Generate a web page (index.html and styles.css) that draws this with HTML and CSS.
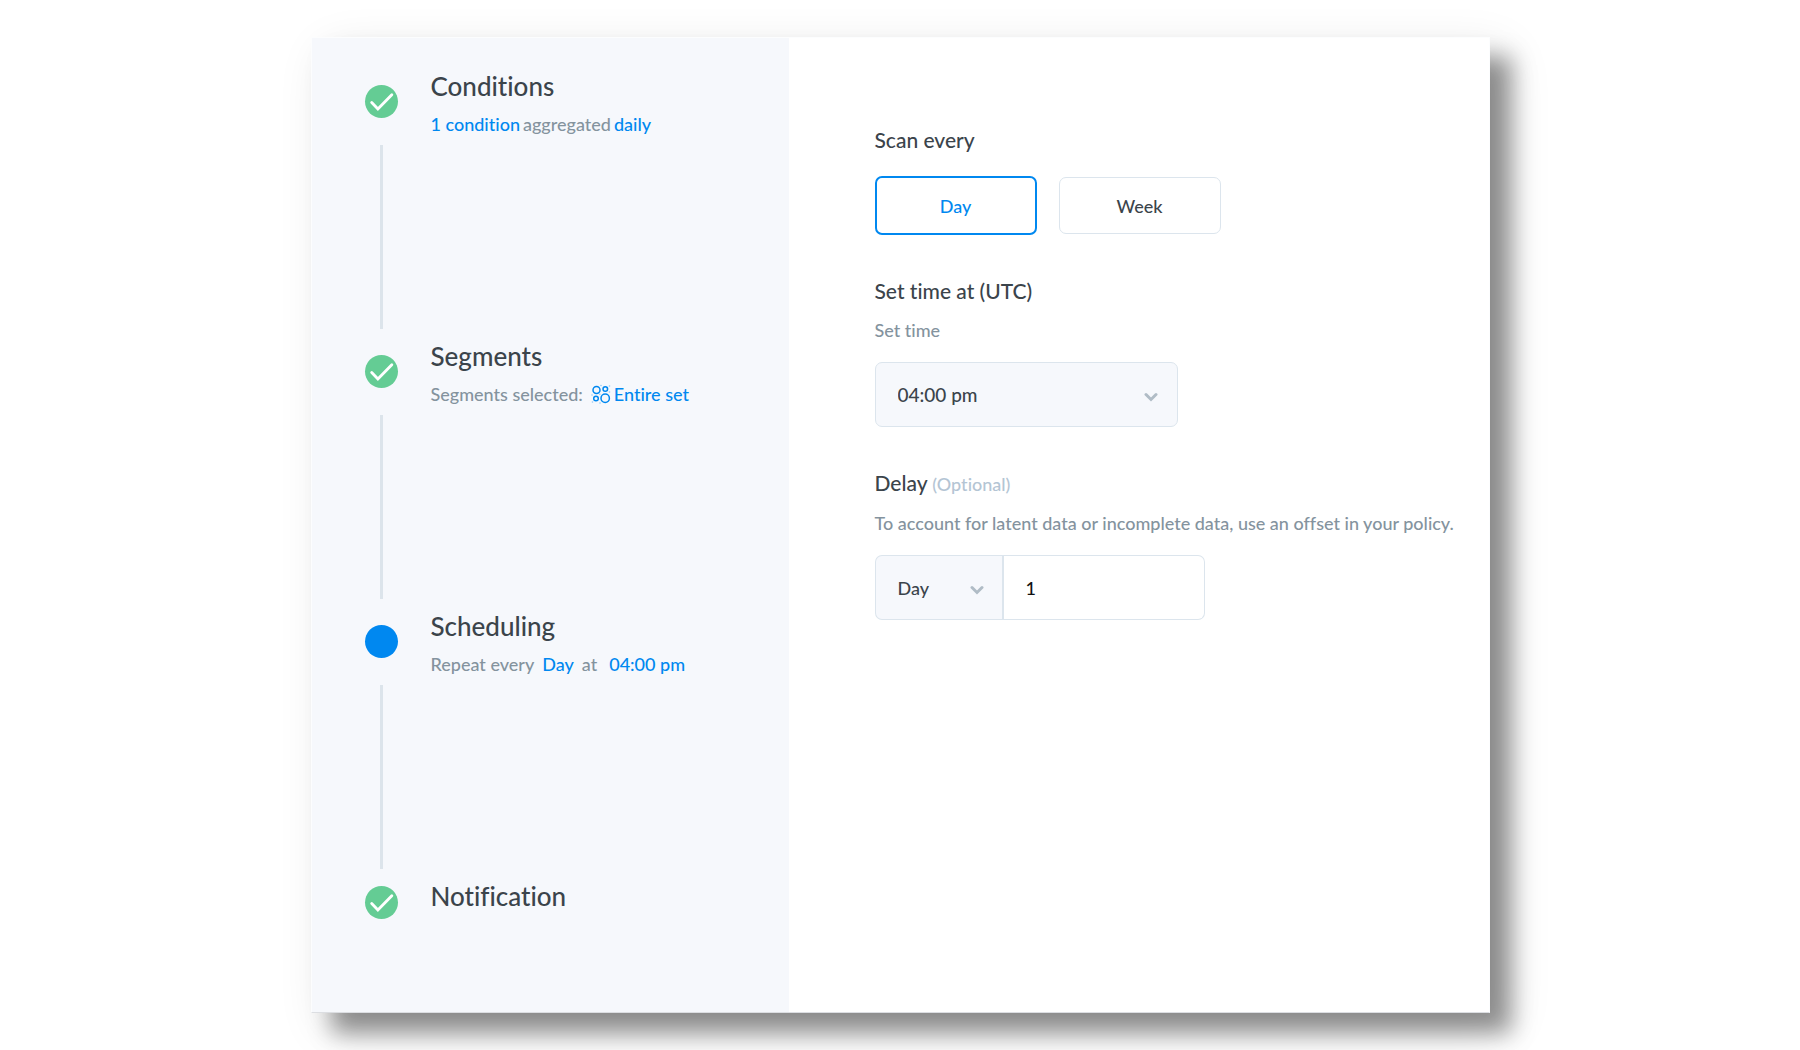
FILE: index.html
```html
<!DOCTYPE html>
<html lang="en">
<head>
<meta charset="utf-8">
<meta name="viewport" content="width=device-width, initial-scale=1">
<title>Scheduling</title>
<link rel="stylesheet" href="styles.css">
</head>
<body>
<svg class="sprite" aria-hidden="true">
  <symbol id="check" viewBox="0 0 32 32"><path d="M6.500 17l6 6.200L26 9.500" fill="none" stroke="#fff" stroke-width="2.800" stroke-linecap="round" stroke-linejoin="miter"/></symbol>
  <symbol id="chevron" viewBox="0 0 14 10"><path d="M2 2.500l5 5 5-5" fill="none" stroke="#b0bcc6" stroke-width="3" stroke-linecap="round"/></symbol>
</svg>
<div class="card">
  <aside class="sidebar">
    <ol class="steps">
      <li class="step">
        <div class="rail"><span class="marker done"><svg><use href="#check"/></svg></span><span class="line"></span></div>
        <div class="step-text">
          <h2>Conditions</h2>
          <p class="summary tight"><b>1 condition</b><span>aggregated</span><b>daily</b></p>
        </div>
      </li>
      <li class="step">
        <div class="rail"><span class="marker done"><svg><use href="#check"/></svg></span><span class="line"></span></div>
        <div class="step-text">
          <h2>Segments</h2>
          <p class="summary"><span>Segments selected:</span>
            <b class="segment"><svg class="segment-icon" viewBox="0 0 20 20" aria-hidden="true"><g fill="none" stroke="#0088f0" stroke-width="1.500"><circle cx="5.500" cy="6" r="3.500"/><circle cx="14.300" cy="5" r="2.300"/><circle cx="5" cy="14.500" r="2.300"/><circle cx="14.200" cy="14.200" r="4.200"/></g><g fill="#0088f0" opacity=".4"><circle cx="10" cy="1.500" r=".8"/><circle cx="18.500" cy="2" r=".8"/><circle cx="18.500" cy="8" r=".8"/><circle cx="1" cy="11" r=".8"/><circle cx="8.800" cy="10.300" r=".8"/><circle cx="1.500" cy="18" r=".8"/><circle cx="9" cy="19" r=".8"/></g></svg>Entire set</b></p>
        </div>
      </li>
      <li class="step" aria-current="step">
        <div class="rail"><span class="marker"></span><span class="line"></span></div>
        <div class="step-text">
          <h2>Scheduling</h2>
          <p class="summary"><span>Repeat every</span><b>Day</b><span>at</span><b class="time">04:00 pm</b></p>
        </div>
      </li>
      <li class="step">
        <div class="rail"><span class="marker done"><svg><use href="#check"/></svg></span></div>
        <div class="step-text"><h2>Notification</h2></div>
      </li>
    </ol>
  </aside>
  <main class="form">
    <section class="group">
      <h3 id="scan">Scan every</h3>
      <div class="choices" role="group" aria-labelledby="scan">
        <button type="button" class="choice selected" aria-pressed="true">Day</button>
        <button type="button" class="choice" aria-pressed="false">Week</button>
      </div>
    </section>
    <section class="group">
      <h3>Set time at (UTC)</h3>
      <label class="hint" for="time">Set time</label>
      <div class="select time-select">
        <select id="time"><option>04:00 pm</option><option>05:00 pm</option></select>
        <svg class="chevron" aria-hidden="true"><use href="#chevron"/></svg>
      </div>
    </section>
    <section class="group">
      <h3>Delay <small>(Optional)</small></h3>
      <label class="hint" for="delay">To account for latent data or incomplete data, use an offset in your policy.</label>
      <div class="delay">
        <div class="select unit-select">
          <select aria-label="Delay unit"><option>Day</option><option>Week</option></select>
          <svg class="chevron" aria-hidden="true"><use href="#chevron"/></svg>
        </div>
        <input id="delay" type="text" inputmode="numeric" value="1">
      </div>
    </section>
  </main>
</div>
</body>
</html>
```
FILE: styles.css
```css
* { box-sizing: border-box; }

body {
  margin: 0;
  padding: 37px 24px;
  background: #fff;
  color: #3b444b;
  font: 500 18px/24px Lato, "Open Sans", sans-serif;
  font-variant-ligatures: none;
}

h2, h3, p, ol { margin: 0; padding: 0; font-weight: 500; }
button, select, input { font: inherit; color: inherit; }
.sprite { display: none; }

.card {
  display: grid;
  grid-template-columns: 477px 1fr;
  max-width: 1179px;
  min-height: calc(100vh - 74px);
  margin: 0 auto;
  border: 1px solid #fcfdfe;
  border-bottom-color: #dcdee2;
  background: #fff;
  box-shadow: 21px 20px 22px rgba(0, 0, 0, .4), 15px 15px 45px rgba(0, 0, 0, .12);
}

.sidebar { padding: 32px 24px 32px 53px; background: #f6f8fc; }
.steps { list-style: none; }
.step { display: flex; gap: 33px; min-height: 270px; }
.step:last-child { min-height: 0; }

.rail {
  display: flex;
  flex-direction: column;
  align-items: center;
  padding: 15px 0 11px;
}
.step:last-child .rail { padding-top: 6px; }
.marker { width: 33px; height: 33px; border-radius: 50%; background: #0088f0; }
.marker.done { background: #64cc94; }
.marker svg { display: block; width: 33px; height: 33px; }
.line { flex: 1; width: 3px; margin-top: 27px; background: #dce4eb; }

h2 { font-size: 26px; line-height: 32px; }
.summary {
  display: flex;
  gap: 8px;
  margin-top: 10px;
  color: #84939e;
}
.summary.tight { gap: 3px; }
.summary b { color: #0088f0; font-weight: 500; }
.segment { display: flex; align-items: center; gap: 3px; }
.segment-icon { width: 20px; height: 20px; }
.time { margin-left: 4px; }

.form {
  display: flex;
  flex-direction: column;
  gap: 42px;
  padding: 88px 24px 88px 86px;
}
h3 { font-size: 21px; line-height: 28px; }
h3 small { font-size: 18px; color: #b4c5d4; }
.hint { display: block; margin: 13px 0 20px; color: #84939e; }

.choices { display: flex; align-items: center; gap: 22px; margin-top: 22px; }
.choice {
  width: 162px;
  height: 57px;
  border: 1px solid #dce5ed;
  border-radius: 7px;
  background: #fff;
}
.choice.selected { height: 59px; border: 2px solid #0088f0; color: #0088f0; }

.select { position: relative; }
.select select {
  appearance: none;
  display: block;
  width: 100%;
  height: 65px;
  padding: 0 40px 0 22px;
  border: 1px solid #dce5ed;
  border-radius: 7px;
  background: #f6f8fc;
}
.chevron {
  position: absolute;
  top: 50%;
  right: 20px;
  width: 14px;
  height: 10px;
  margin-top: -3px;
  pointer-events: none;
}
.time-select { width: 303px; }
.time-select select { font-size: 19px; }

.delay { display: flex; width: 330px; }
.unit-select { width: 129px; }
.unit-select select { border-right-width: 2px; border-radius: 7px 0 0 7px; }
.delay input {
  flex: 1;
  min-width: 0;
  height: 65px;
  padding: 0 22px;
  border: 1px solid #dce5ed;
  border-left: 0;
  border-radius: 0 7px 7px 0;
  background: #fff;
  color: #111;
}
```
